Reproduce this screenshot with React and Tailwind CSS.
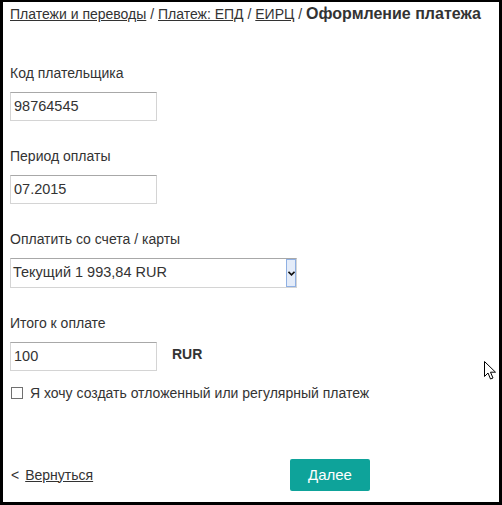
import React from 'react';

function Field({ label, children }) {
  return (
    <div className="mt-[27px]">
      <div className="text-[14px] leading-[16px] text-[#333]">{label}</div>
      <div className="mt-[11px]">{children}</div>
    </div>
  );
}

function TextBox({ value }) {
  return (
    <div className="w-[147px] h-[29px] border border-[#d4d4d4] border-t-[#a8a8a8] bg-white flex items-center pl-[3px] text-[14.5px] text-[#333]">
      {value}
    </div>
  );
}

function Cursor() {
  return (
    <svg className="absolute left-[481px] top-[359px]" width="13" height="20" viewBox="0 0 13 20">
      <path
        d="M0.5 0.5 L0.5 15.5 L4 12 L6.5 18 L9 17 L6.5 11.2 L11.5 11.2 Z"
        fill="#fff"
        stroke="#000"
        strokeWidth="1"
        strokeLinejoin="miter"
      />
    </svg>
  );
}

export default function App() {
  return (
    <div
      className="relative w-[502px] h-[505px] bg-white border-black border-t-2 border-l-[3px] border-r-[3px] border-b-[3px] pl-[7px] flex flex-col text-[#333]"
      style={{ fontFamily: '"Liberation Sans", Arial, sans-serif' }}
    >
      <div className="h-[24px] leading-[24px] text-[14px] whitespace-nowrap">
        <a className="underline">Платежи и переводы</a>
        <span> / </span>
        <a className="underline">Платеж: ЕПД</a>
        <span> / </span>
        <a className="underline">ЕИРЦ</a>
        <span> / </span>
        <span className="font-bold text-[16px]">Оформление платежа</span>
      </div>

      <div className="mt-[12px]">
        <Field label="Код плательщика">
          <TextBox value="98764545" />
        </Field>
        <Field label="Период оплаты">
          <TextBox value="07.2015" />
        </Field>
        <Field label="Оплатить со счета / карты">
          <div className="w-[287px] h-[30px] border border-[#d4d4d4] border-t-[#a8a8a8] bg-white flex items-center text-[14.5px]">
            <span className="flex-1 pl-[2px]">Текущий 1 993,84 RUR</span>
            <span className="w-[10px] h-[28px] bg-[#e4ecf9] border border-[#8fb0e3] flex items-center justify-center">
              <svg width="7" height="5" viewBox="0 0 7 5">
                <path d="M0.5 0.8 L3.5 3.8 L6.5 0.8" fill="none" stroke="#111" strokeWidth="1.6" />
              </svg>
            </span>
          </div>
        </Field>
        <Field label="Итого к оплате">
          <div className="flex items-center">
            <TextBox value="100" />
            <span className="ml-[15px] font-bold text-[14px] mt-[-4px]">RUR</span>
          </div>
        </Field>

        <div className="mt-[14px] flex items-center">
          <span className="w-[12px] h-[12px] border border-[#707070] bg-white ml-px" />
          <span className="ml-[7px] text-[14px] leading-[16px]">Я хочу создать отложенный или регулярный платеж</span>
        </div>
      </div>

      <div className="mt-auto mb-[11px] flex items-center">
        <div className="w-[280px] flex items-center text-[14px]">
          <span className="ml-px">&lt;</span>
          <a className="ml-[6px] underline">Вернуться</a>
        </div>
        <button className="w-[80px] h-[32px] rounded-[2px] bg-[#0ea39a] text-white text-[15px]">Далее</button>
      </div>

      <Cursor />
    </div>
  );
}
